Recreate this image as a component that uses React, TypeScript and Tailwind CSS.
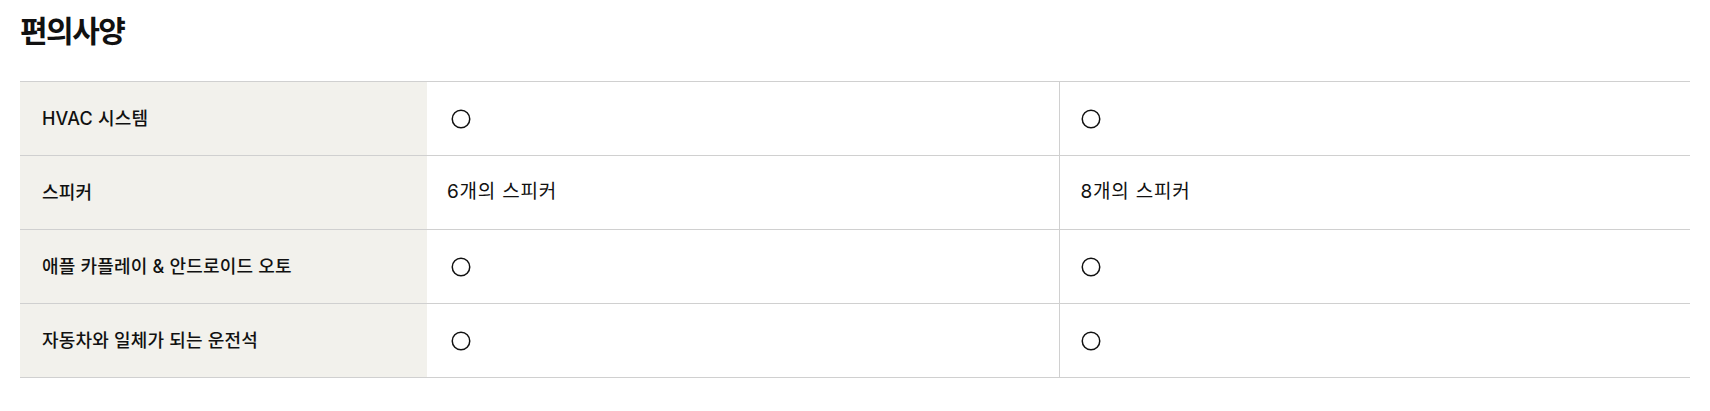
import React from 'react';

type Row = {
  label: string;
  values: (string | null)[];
};

// null = supported (○)
const rows: Row[] = [
  { label: 'HVAC 시스템', values: [null, null] },
  { label: '스피커', values: ['6개의 스피커', '8개의 스피커'] },
  { label: '애플 카플레이 & 안드로이드 오토', values: [null, null] },
  { label: '자동차와 일체가 되는 운전석', values: [null, null] },
];

const Check = () => (
  <svg width="20" height="20" viewBox="0 0 20 20" className="block">
    <circle cx="10" cy="10" r="8.75" fill="none" stroke="#111" strokeWidth="1.5" />
  </svg>
);

export default function App() {
  return (
    <div
      className="bg-white px-5 text-[#111] min-h-[411px]"
      style={{ fontFamily: 'Inter, "Noto Sans CJK KR", sans-serif' }}
    >
      <h2 className="h-[81px] pt-[11px] text-[30px] leading-[40px] font-semibold tracking-[-1.5px]">
        편의사양
      </h2>

      <div className="border-b border-[#d0d0d0]">
        {rows.map((row) => (
          <div
            key={row.label}
            className="grid grid-cols-[407px_1fr_1fr] h-[74px] border-t border-[#d0d0d0]"
          >
            <div className="bg-[#f2f1ec] flex items-center pl-[22px] text-[18px] font-medium tracking-[0.2px]">
              {row.label}
            </div>
            {row.values.map((v, i) => (
              <div
                key={i}
                className={
                  i === 1
                    ? 'flex items-center pl-[21px] border-l border-[#d0d0d0] text-[19px] tracking-[0.8px]'
                    : 'flex items-center pl-[20px] text-[19px] tracking-[0.8px]'
                }
              >
                {v === null ? (
                  <span className={i === 1 ? 'ml-0' : 'ml-[4px]'}>
                    <Check />
                  </span>
                ) : (
                  v
                )}
              </div>
            ))}
          </div>
        ))}
      </div>
    </div>
  );
}
